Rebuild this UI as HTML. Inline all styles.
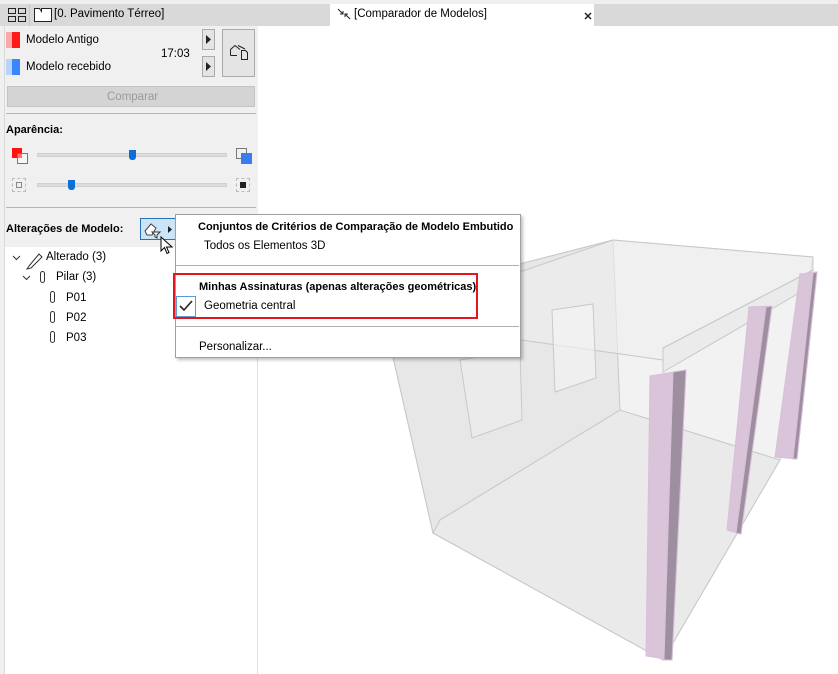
<!DOCTYPE html>
<html><head><meta charset="utf-8"><style>
*{margin:0;padding:0;box-sizing:border-box}
body{width:838px;height:674px;overflow:hidden;background:#fff;font-family:"Liberation Sans",sans-serif;font-size:11.5px;color:#000;position:relative}
.a{position:absolute}
.t{position:absolute;white-space:nowrap;font-size:11.5px}
.b{font-weight:bold;font-size:11px}
</style></head><body>
<div class="a" style="left:0;top:0;width:838px;height:4px;background:#efefef"></div>
<div class="a" style="left:0;top:4px;width:838px;height:22px;background:#d9d9d9"></div>
<svg class="a" style="left:7px;top:7px" width="20" height="16"><g fill="none" stroke="#222"><rect x="1.5" y="1.5" width="7" height="5"/><rect x="11.5" y="1.5" width="7" height="5"/><rect x="1.5" y="9.5" width="7" height="5"/><rect x="11.5" y="9.5" width="7" height="5"/></g></svg>
<div class="a" style="left:29px;top:4px;width:1px;height:22px;background:#c8c8c8"></div>
<svg class="a" style="left:33px;top:7px" width="20" height="16"><path d="M1.5 14.5V1.5H6.5L8.5 4.5V1.5H18.5V14.5Z" fill="#fff" stroke="#222"/></svg>
<div class="t" style="left:54px;top:8px">[0. Pavimento Térreo]</div>
<div class="a" style="left:330px;top:4px;width:264px;height:22px;background:#fff"></div>
<svg class="a" style="left:337px;top:8px" width="14" height="12"><path d="M1 1l5 5M6 3v3H3M13 11L8 6M8 9V6h3" stroke="#222" fill="none"/></svg>
<div class="t" style="left:354px;top:8px">[Comparador de Modelos]</div>
<svg class="a" style="left:584px;top:12px" width="8" height="8"><path d="M1 1l6 6M7 1L1 7" stroke="#222" stroke-width="1.5"/></svg>
<div class="a" style="left:0;top:26px;width:258px;height:648px;background:#f0f0f0"></div>
<div class="a" style="left:4px;top:26px;width:1px;height:648px;background:#dadada"></div>
<div class="a" style="left:6px;top:32px;width:6px;height:16px;background:#f8a9a9"></div>
<div class="a" style="left:12px;top:32px;width:8px;height:16px;background:#ff1a1a"></div>
<div class="a" style="left:6px;top:59px;width:6px;height:16px;background:#b8d4f8"></div>
<div class="a" style="left:12px;top:59px;width:8px;height:16px;background:#3a86ff"></div>
<div class="t" style="left:26px;top:34px">Modelo Antigo</div>
<div class="t" style="left:26px;top:61px">Modelo recebido</div>
<div class="t" style="left:161px;top:48px">17:03</div>
<div class="a" style="left:202px;top:29px;width:13px;height:21px;border:1px solid #aaa;background:#e4e4e4"></div>
<svg class="a" style="left:206px;top:35px" width="6" height="9"><path d="M0 0l5 4.5L0 9z" fill="#222"/></svg>
<div class="a" style="left:202px;top:56px;width:13px;height:21px;border:1px solid #aaa;background:#e4e4e4"></div>
<svg class="a" style="left:206px;top:62px" width="6" height="9"><path d="M0 0l5 4.5L0 9z" fill="#222"/></svg>
<div class="a" style="left:222px;top:29px;width:33px;height:48px;border:1px solid #aaa;background:#e4e4e4"></div>
<svg class="a" style="left:228px;top:42px" width="22" height="20"><path d="M2.5 13.5V7.5L7 3.5L12 7.5M2.5 13.5H9M10 3.5L17 7M13.5 8.5H17.5L19.5 10.5V17.5H13.5Z" fill="none" stroke="#222"/></svg>
<div class="a" style="left:7px;top:86px;width:248px;height:21px;background:#d4d4d4;border:1px solid #c4c4c4"></div>
<div class="t" style="left:107px;top:91px;color:#9a9a9a">Comparar</div>
<div class="a" style="left:6px;top:113px;width:250px;height:1px;background:#b5b5b5"></div>
<div class="t b" style="left:6px;top:124px">Aparência:</div>
<div class="a" style="left:12px;top:148px;width:10px;height:10px;background:#f11"></div>
<div class="a" style="left:17px;top:153px;width:11px;height:11px;border:1px solid #777;background:rgba(255,255,255,.4)"></div>
<div class="a" style="left:37px;top:153px;width:190px;height:4px;background:#dcdcdc;border:1px solid #d0d0d0"></div>
<div class="a" style="left:129px;top:150px;width:7px;height:10px;background:#0a6fd6;border-radius:0 0 3px 3px"></div>
<div class="a" style="left:236px;top:148px;width:11px;height:11px;border:1px solid #777"></div>
<div class="a" style="left:241px;top:153px;width:11px;height:11px;background:#3a7cf0"></div>
<div class="a" style="left:12px;top:178px;width:14px;height:14px;border:1px dashed #bbb"></div>
<div class="a" style="left:16px;top:182px;width:6px;height:6px;border:1px solid #888"></div>
<div class="a" style="left:37px;top:183px;width:190px;height:4px;background:#dcdcdc;border:1px solid #d0d0d0"></div>
<div class="a" style="left:68px;top:180px;width:7px;height:10px;background:#0a6fd6;border-radius:0 0 3px 3px"></div>
<div class="a" style="left:236px;top:178px;width:14px;height:14px;border:1px dashed #bbb"></div>
<div class="a" style="left:240px;top:182px;width:6px;height:6px;background:#222"></div>
<div class="a" style="left:6px;top:207px;width:250px;height:1px;background:#b5b5b5"></div>
<div class="t b" style="left:6px;top:223px">Alterações de Modelo:</div>
<div class="a" style="left:140px;top:218px;width:36px;height:22px;background:#cce4f7;border:1px solid #2b6fb5"></div>
<svg class="a" style="left:142px;top:220px" width="34" height="20"><path d="M3 11L9 4L14 8L10 15H5Z" fill="#fff" stroke="#444"/><path d="M10 12h8l-3 3v3l-2-1v-2z" fill="#fff" stroke="#333"/><path d="M26 6l4 3.5L26 13z" fill="#222"/></svg>
<div class="a" style="left:5px;top:247px;width:253px;height:427px;background:#fff"></div>
<div class="a" style="left:257px;top:247px;width:1px;height:427px;background:#e2e2e2"></div>
<svg class="a" style="left:12px;top:252px" width="240" height="95" fill="none" stroke="#333">
<path d="M1 4l3.5 3.5L8 4"/><path d="M17 14L27 2l3 3L19 16l-4 1z"/>
<path d="M11 24l3.5 3.5L18 24"/><rect x="28.5" y="19.5" width="4" height="11" rx="2"/>
<rect x="38.5" y="39.5" width="4" height="11" rx="2"/><rect x="38.5" y="59.5" width="4" height="11" rx="2"/><rect x="38.5" y="79.5" width="4" height="11" rx="2"/>
</svg>
<div class="t" style="left:46px;top:251px">Alterado (3)</div>
<div class="t" style="left:56px;top:271px">Pilar (3)</div>
<div class="t" style="left:66px;top:292px">P01</div>
<div class="t" style="left:66px;top:312px">P02</div>
<div class="t" style="left:66px;top:332px">P03</div>
<svg class="a" style="left:259px;top:26px" width="579" height="648" viewBox="259 26 579 648">
<g stroke="#c8c8c8" stroke-width="1" fill="#e9e9e9" fill-opacity=".6">
<polygon points="380,300 613,240 813,257 780,460 663,660 433,533"/>
<polygon points="433,533 663,660 780,460 620,410 440,520" fill="#e4e4e4"/>
<polygon points="380,300 613,240 620,410 440,520 433,533" fill="#e0e0e0"/>
<polygon points="613,240 813,257 813,270 663,348 663,360 380,320" fill="#eeeeee"/>
<polygon points="663,348 813,270 813,285 663,372" fill="#e6e6e6"/>
<polygon points="552,310 593,304 596,378 555,392" fill="#f5f5f5"/>
<polygon points="460,360 520,350 522,420 472,438" fill="#efefef"/>
</g>
<g stroke="#d8c0d8">
<polygon points="800,274 817,272 797,459 775,457" fill="#d9c4da"/>
<polygon points="813,273 817,272 797,459 793,459" fill="#9e8fa0"/>
<polygon points="749,307 772,306 741,534 727,530" fill="#d9c4da"/>
<polygon points="766,307 772,306 741,534 736,533" fill="#9e8fa0"/>
<polygon points="650,376 686,370 672,660 646,656" fill="#d9c4da"/>
<polygon points="673,372 686,370 672,660 664,660" fill="#9e8fa0"/>
</g>
</svg>
<div class="a" style="left:175px;top:214px;width:346px;height:144px;background:#fff;border:1px solid #a0a0a0;box-shadow:2px 2px 3px rgba(0,0,0,.25)"></div>
<div class="t b" style="left:198px;top:221px">Conjuntos de Critérios de Comparação de Modelo Embutido</div>
<div class="t" style="left:204px;top:240px">Todos os Elementos 3D</div>
<div class="a" style="left:176px;top:265px;width:343px;height:1px;background:#b0b0b0"></div>
<div class="a" style="left:173px;top:273px;width:305px;height:46px;border:2px solid #e5141d"></div>
<div class="t b" style="left:199px;top:281px">Minhas Assinaturas (apenas alterações geométricas)</div>
<div class="a" style="left:176px;top:296px;width:20px;height:21px;border:1px solid #5b9bd5"></div>
<svg class="a" style="left:179px;top:300px" width="14" height="12"><path d="M1 6l4 4 8-9" fill="none" stroke="#222" stroke-width="1.6"/></svg>
<div class="t" style="left:204px;top:300px">Geometria central</div>
<div class="a" style="left:176px;top:326px;width:343px;height:1px;background:#b0b0b0"></div>
<div class="t" style="left:199px;top:341px">Personalizar...</div>
<svg class="a" style="left:160px;top:236px" width="14" height="20"><path d="M1 1v14l3.5-3.5 2.5 6 2-1-2.5-5.5H12z" fill="#fff" stroke="#000"/></svg>
</body></html>
